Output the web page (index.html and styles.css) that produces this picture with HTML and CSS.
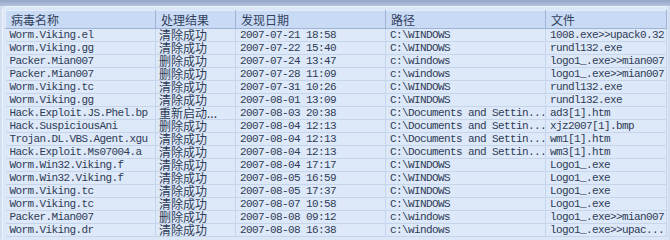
FILE: index.html
```html
<!DOCTYPE html>
<html lang="zh">
<head>
<meta charset="utf-8">
<link rel="stylesheet" href="styles.css">
</head>
<body>
<div class="topband"></div>
<div class="panel">
<table class="grid">
<colgroup>
<col class="c1"><col class="c2"><col class="c3"><col class="c4"><col class="c5">
</colgroup>
<thead>
<tr><th>病毒名称</th><th>处理结果</th><th>发现日期</th><th>路径</th><th>文件</th></tr>
</thead>
<tbody>
<tr><td>Worm.Viking.el</td><td class="zh">清除成功</td><td>2007-07-21 18:58</td><td>C:\WINDOWS</td><td>1008.exe&gt;&gt;upack0.32</td></tr>
<tr><td>Worm.Viking.gg</td><td class="zh">清除成功</td><td>2007-07-22 15:40</td><td>C:\WINDOWS</td><td>rundl132.exe</td></tr>
<tr><td>Packer.Mian007</td><td class="zh">删除成功</td><td>2007-07-24 13:47</td><td>c:\windows</td><td>logo1_.exe&gt;&gt;mian007</td></tr>
<tr><td>Packer.Mian007</td><td class="zh">删除成功</td><td>2007-07-28 11:09</td><td>c:\windows</td><td>logo1_.exe&gt;&gt;mian007</td></tr>
<tr><td>Worm.Viking.tc</td><td class="zh">清除成功</td><td>2007-07-31 10:26</td><td>C:\WINDOWS</td><td>rundl132.exe</td></tr>
<tr><td>Worm.Viking.gg</td><td class="zh">清除成功</td><td>2007-08-01 13:09</td><td>C:\WINDOWS</td><td>rundl132.exe</td></tr>
<tr><td>Hack.Exploit.JS.Phel.bp</td><td class="zh">重新启动...</td><td>2007-08-03 20:38</td><td>C:\Documents and Settin...</td><td>ad3[1].htm</td></tr>
<tr><td>Hack.SuspiciousAni</td><td class="zh">删除成功</td><td>2007-08-04 12:13</td><td>C:\Documents and Settin...</td><td>xjz2007[1].bmp</td></tr>
<tr><td>Trojan.DL.VBS.Agent.xgu</td><td class="zh">清除成功</td><td>2007-08-04 12:13</td><td>C:\Documents and Settin...</td><td>wm1[1].htm</td></tr>
<tr><td>Hack.Exploit.Ms07004.a</td><td class="zh">清除成功</td><td>2007-08-04 12:13</td><td>C:\Documents and Settin...</td><td>wm3[1].htm</td></tr>
<tr><td>Worm.Win32.Viking.f</td><td class="zh">清除成功</td><td>2007-08-04 17:17</td><td>C:\WINDOWS</td><td>Logo1_.exe</td></tr>
<tr><td>Worm.Win32.Viking.f</td><td class="zh">清除成功</td><td>2007-08-05 16:59</td><td>C:\WINDOWS</td><td>Logo1_.exe</td></tr>
<tr><td>Worm.Viking.tc</td><td class="zh">清除成功</td><td>2007-08-05 17:37</td><td>C:\WINDOWS</td><td>Logo1_.exe</td></tr>
<tr><td>Worm.Viking.tc</td><td class="zh">清除成功</td><td>2007-08-07 10:58</td><td>C:\WINDOWS</td><td>Logo1_.exe</td></tr>
<tr><td>Packer.Mian007</td><td class="zh">删除成功</td><td>2007-08-08 09:12</td><td>c:\windows</td><td>logo1_.exe&gt;&gt;mian007</td></tr>
<tr><td>Worm.Viking.dr</td><td class="zh">清除成功</td><td>2007-08-08 16:38</td><td>c:\windows</td><td>logo1_.exe&gt;&gt;upac...</td></tr>
</tbody>
</table>
</div>
</body>
</html>
```
FILE: styles.css
```css
html, body {
  margin: 0;
  padding: 0;
  width: 670px;
  height: 240px;
  overflow: hidden;
  background: #d3def0;
}
.topband {
  height: 6px;
  background: linear-gradient(#93a5c6, #b4c2dc);
}
.panel {
  margin-left: 2px;
  margin-right: 2px;
  height: 234px;
  background: #dbe6f6;
  border-top: 1px solid #eef3fb;
  border-left: 1px solid #eef3fb;
  border-top-left-radius: 5px;
  padding: 3px 0 0 2px;
  box-sizing: border-box;
}
.grid {
  table-layout: fixed;
  border-collapse: collapse;
  width: 661px;
  font-family: "Liberation Mono", "Noto Sans CJK SC", monospace;
  font-size: 11px;
  letter-spacing: -0.6px;
  color: #2e3c57;
}
.c1 { width: 150px; }
.c2 { width: 80px; }
.c3 { width: 150px; }
.c4 { width: 160px; }
.c5 { width: 121px; }
th {
  height: 18px;
  padding: 0 0 0 5px;
  text-align: left;
  font-family: "Noto Sans CJK SC", sans-serif;
  font-weight: normal;
  font-size: 12px;
  letter-spacing: 0;
  line-height: 16px;
  color: #32425e;
  background: #c8daf4;
  border: 1px solid #9fb3d5;
  border-top-color: #e3ecf9;
  border-left-color: #e6eefa;
  box-sizing: border-box;
}
td {
  height: 13px;
  padding: 0 0 0 4px;
  line-height: 12px;
  white-space: nowrap;
  overflow: hidden;
  border-bottom: 1px solid #c6d5ec;
  border-right: 1px solid #c6d5ec;
  box-sizing: border-box;
  background: #dde8f8;
}
tbody tr:first-child td {
  border-top: 1px solid #eef3fb;
}
td.zh {
  font-family: "Noto Sans CJK SC", sans-serif;
  font-size: 12px;
  line-height: 12px;
  letter-spacing: 0;
  padding-left: 3px;
  overflow: visible;
}
```
